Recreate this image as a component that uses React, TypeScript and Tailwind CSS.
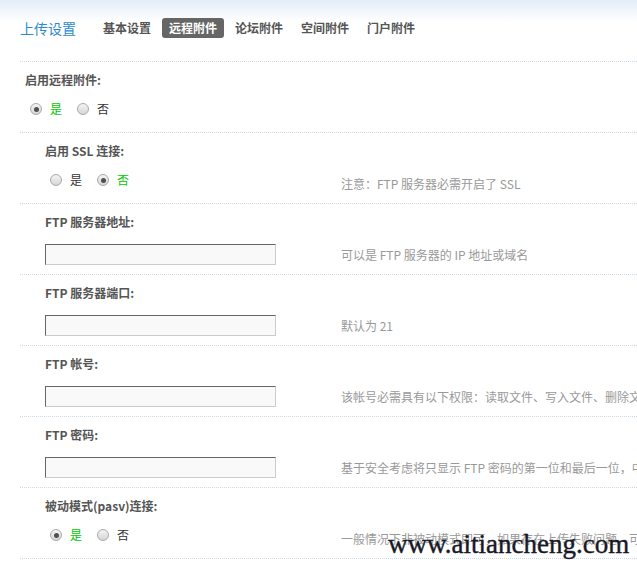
import type { ReactNode } from 'react'

const FONT = { fontFamily: '"Noto Sans CJK SC", "Noto Sans", sans-serif' }

const tabs = ['基本设置', '远程附件', '论坛附件', '空间附件', '门户附件']

function Radio({ checked, label }: { checked: boolean; label: string }) {
  return (
    <span className="flex items-center gap-[8px]">
      <span className="flex h-[12px] w-[12px] items-center justify-center rounded-full border border-[#a9a9a9] bg-gradient-to-b from-[#f4f4f4] to-[#d6d6d6]">
        {checked ? <span className="h-[5px] w-[5px] rounded-full bg-[#505050]" /> : null}
      </span>
      <span className={checked ? 'text-[#00c800]' : 'text-[#333]'}>{label}</span>
    </span>
  )
}

function RadioPair({ yes }: { yes: boolean }) {
  return (
    <div className="flex h-[14px] items-center gap-[15px] pl-[5px] leading-[14px]">
      <Radio checked={yes} label="是" />
      <Radio checked={!yes} label="否" />
    </div>
  )
}

function TextInput() {
  return <div className="h-[21px] w-[231px] border border-t-[#666] border-l-[#666] border-b-[#ccc] border-r-[#ccc] bg-[#f9f9f9]" />
}

function Section({ label, indent, control, tip }: { label: string; indent?: boolean; control: ReactNode; tip?: string }) {
  return (
    <div className={`h-[71px] border-t border-dotted border-[#cddbe6] ${indent ? 'pl-[25px]' : 'pl-[5px]'}`}>
      <div className="pt-[11px] text-[12px] font-bold leading-[14px] text-[#555]">{label}</div>
      <div className="mt-[15px] flex items-start">
        <div className="w-[296px] shrink-0">{control}</div>
        {tip ? <div className="mt-[4px] whitespace-nowrap text-[12px] leading-[14px] text-[#999]">{tip}</div> : null}
      </div>
    </div>
  )
}

export default function App() {
  return (
    <div className="relative h-[566px] w-[637px] overflow-hidden bg-white text-[12px]" style={FONT}>
      <div className="flex h-[61px] items-center bg-[linear-gradient(to_bottom,#e3edf7,#ffffff_22px)] pb-[6px] pl-[20px]">
        <span className="text-[14px] leading-[16px] text-[#2b8bcc]">上传设置</span>
        <div className="ml-[20px] flex items-center gap-[4px]">
          {tabs.map((t) => (
            <span
              key={t}
              className={`rounded-[3px] px-[7px] py-[3px] text-[12px] font-bold leading-[14px] ${t === '远程附件' ? 'bg-[#666] text-white' : 'text-[#555]'}`}
            >
              {t}
            </span>
          ))}
        </div>
      </div>

      <div className="ml-[20px] border-b border-dotted border-[#cddbe6]">
        <Section label="启用远程附件:" control={<RadioPair yes />} />
        <Section label="启用 SSL 连接:" indent control={<RadioPair yes={false} />} tip="注意：FTP 服务器必需开启了 SSL" />
        <Section label="FTP 服务器地址:" indent control={<TextInput />} tip="可以是 FTP 服务器的 IP 地址或域名" />
        <Section label="FTP 服务器端口:" indent control={<TextInput />} tip="默认为 21" />
        <Section
          label="FTP 帐号:"
          indent
          control={<TextInput />}
          tip="该帐号必需具有以下权限：读取文件、写入文件、删除文件、创建目录、子目录继承"
        />
        <Section
          label="FTP 密码:"
          indent
          control={<TextInput />}
          tip="基于安全考虑将只显示 FTP 密码的第一位和最后一位，中间显示八个 * 号"
        />
        <Section
          label="被动模式(pasv)连接:"
          indent
          control={<RadioPair yes />}
          tip="一般情况下非被动模式即可，如果存在上传失败问题，可尝试打开此设置"
        />
      </div>

      {/* watermark */}
      <div
        className="absolute left-[388px] top-[529px] whitespace-nowrap text-[27px] leading-[30px] text-[#181826] [-webkit-text-stroke:0.4px_#181826]"
        style={{ fontFamily: '"Liberation Serif", serif' }}
      >
        www.aitiancheng.com
      </div>
    </div>
  )
}
